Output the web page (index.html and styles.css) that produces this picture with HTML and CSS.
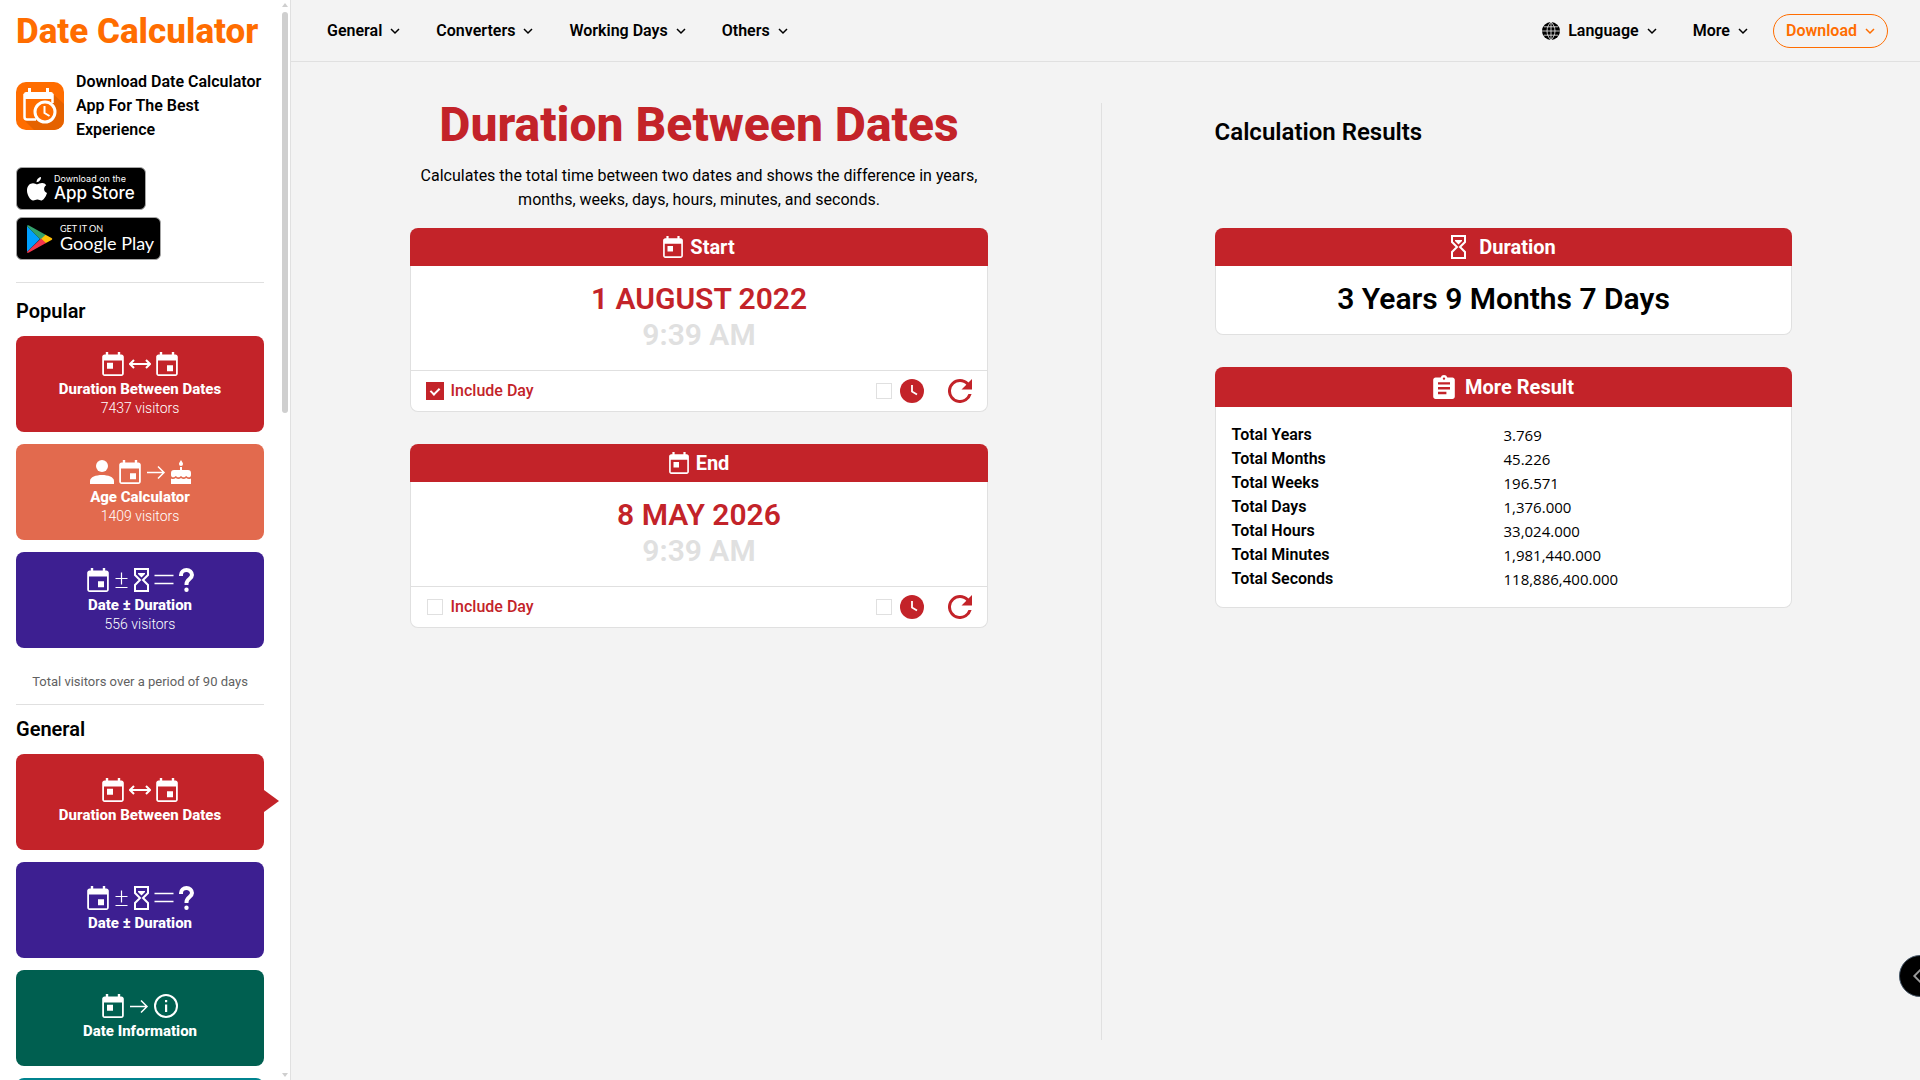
FILE: index.html
```html
<!DOCTYPE html>
<html lang="en">
<head>
  <meta charset="UTF-8">
  <meta name="viewport" content="width=device-width, initial-scale=1.0">
  <title>Date Calculator - Duration Between Dates</title>
  <link rel="stylesheet" href="styles.css">
</head>
<body>
  <!-- Icon set -->
  <svg class="icon-set" aria-hidden="true">
    <symbol id="cal-left" viewBox="3 1 18 20"><path d="M19 3h-1V1h-2v2H8V1H6v2H5c-1.1 0-2 .9-2 2v14c0 1.1.9 2 2 2h14c1.1 0 2-.9 2-2V5c0-1.100-.9-2-2-2zm.5 16.500h-15V8h15v11.500zM7 10h5v5H7z"/></symbol>
    <symbol id="cal-right" viewBox="3 1 18 20"><path d="M19 3h-1V1h-2v2H8V1H6v2H5c-1.100 0-2 .9-2 2v14c0 1.100.9 2 2 2h14c1.100 0 2-.9 2-2V5c0-1.100-.9-2-2-2zm.5 16.500h-15V8h15v11.500zM12 12h5v5h-5z"/></symbol>
    <symbol id="both" viewBox="0 0 22 24"><path d="M1 12h20M5 8l-4 4 4 4M17 8l4 4-4 4" fill="none" stroke="currentColor" stroke-width="2"/></symbol>
    <symbol id="arrow" viewBox="0 0 18 24"><path d="M0 12.500h17M11 6.500l6 6-6 6" fill="none" stroke="currentColor" stroke-width="1.500"/></symbol>
    <symbol id="person" viewBox="0 0 24 24"><circle cx="12" cy="6" r="6"/><path d="M0 24v-3c0-4 6-6 12-6s12 2 12 6v3z"/></symbol>
    <symbol id="cake" viewBox="0 0 20 24"><path d="M10 6a2 2 0 0 0 2-2c0-1-.6-1.500-2-4-1.400 2.500-2 3-2 4a2 2 0 0 0 2 2zM11 10V7H9v3H3a3 3 0 0 0-3 3v2c0 1.400 1 2.300 2.200 2.300 1 0 1.600-.4 2.600-1.300 1 .9 1.600 1.300 2.600 1.300S9 16.900 10 16c1 .9 1.600 1.300 2.600 1.300s1.600-.4 2.600-1.300c1 .9 1.600 1.300 2.600 1.300 1.200 0 2.200-.9 2.200-2.300v-2a3 3 0 0 0-3-3zM15.200 18c-1.700 1.400-3.500 1.400-5.200 0-1.700 1.400-3.500 1.400-5.200 0-1.600 1.300-3.300 1.400-4.800.5V24h20v-5.500c-1.500.9-3.200.8-4.800-.5z"/></symbol>
    <symbol id="plusminus" viewBox="0 0 12 24"><path d="M0 10.500h12M6 4.500v12M0 19.500h12" fill="none" stroke="currentColor" stroke-width="1.200"/></symbol>
    <symbol id="hourglass" viewBox="0 0 15 24"><path d="M1 1h13v6l-5 5 5 5v6H1v-6l5-5-5-5z" fill="none" stroke="currentColor" stroke-width="2"/><path d="M4 5h7v1L7.500 9.500 4 6z"/></symbol>
    <symbol id="equals" viewBox="0 0 19 24"><path d="M0 7.500h19M0 15.500h19" fill="none" stroke="currentColor" stroke-width="1.300"/></symbol>
    <symbol id="question" viewBox="0 0 15 24"><path d="M2 8V7a5.500 5 0 0 1 11 0c0 4-5.500 4-5.500 9v1" fill="none" stroke="currentColor" stroke-width="4"/><circle cx="7.500" cy="21.800" r="2.200"/></symbol>
    <symbol id="info" viewBox="0 0 24 24"><circle cx="12" cy="12" r="11" fill="none" stroke="currentColor" stroke-width="2"/><path d="M11 10.500h2.200V18H11zM11 6h2.200v2.200H11z"/></symbol>
    <symbol id="chevron" viewBox="0 0 10 10"><path d="M1 3l4 4 4-4" fill="none" stroke="currentColor" stroke-width="1.500"/></symbol>
    <symbol id="globe" viewBox="0 0 18 18"><circle cx="9" cy="9" r="9"/><path d="M9 0v18M0 9h18M2 4.800h14M2 13.200h14M9 0C3.700 5 3.700 13 9 18M9 0c5.300 5 5.300 13 0 18" fill="none" stroke="#f3f3f3" stroke-width=".8"/></symbol>
    <symbol id="clock" viewBox="0 0 24 24"><circle cx="12" cy="12" r="12"/><path d="M12 6v6.500l5 3" fill="none" stroke="#fff" stroke-width="1.800"/></symbol>
    <symbol id="refresh" viewBox="4 4 16 16"><path d="M17.650 6.350A7.960 7.960 0 0 0 12 4a8 8 0 1 0 7.730 10h-2.080A6 6 0 1 1 12 6c1.660 0 3.140.69 4.220 1.780L13 11h7V4z"/></symbol>
    <symbol id="clipboard" viewBox="3 1 18 20"><path d="M19 3h-4.200a3 3 0 0 0-5.600 0H5c-1.100 0-2 .9-2 2v14c0 1.100.9 2 2 2h14c1.100 0 2-.9 2-2V5c0-1.100-.9-2-2-2zm-7 0a1 1 0 1 1 0 2 1 1 0 0 1 0-2zm2 14H7v-2h7zm3-4H7v-2h10zm0-4H7V7h10z"/></symbol>
  </svg>

  <aside class="sidebar">
    <div class="sidebar-content">
      <a class="brand" href="#">Date Calculator</a>

      <div class="app-promo">
        <svg class="app-icon" viewBox="0 0 48 48" aria-hidden="true">
          <rect width="48" height="48" rx="10" fill="#ff6d00"/>
          <path d="M36 11l12 11v16a10 10 0 0 1-10 10H18L9 39z" fill="#e56200"/>
          <path d="M10 17h26v8l-8 13H10z" fill="#ff6d00"/>
          <path d="M20 37.500H11a2.500 2.500 0 0 1-2.500-2.500V13h28v8" fill="none" stroke="#fff" stroke-width="2.500"/>
          <path d="M8 17v-5a2 2 0 0 1 2-2h2V6h3v4h15V6h3v4h2a2 2 0 0 1 2 2v5z" fill="#fff"/>
          <circle cx="29" cy="30" r="10" fill="#ff6d00" stroke="#fff" stroke-width="3"/>
          <path d="M28.500 24v7l5 3" fill="none" stroke="#fff" stroke-width="2"/>
        </svg>
        <p>Download Date Calculator App For The Best Experience</p>
      </div>

      <div class="stores">
        <a class="store app-store" href="#">
          <svg width="20" height="24" viewBox="0 0 20 24" aria-hidden="true"><path fill="#fff" d="M14 0c.2 2.700-1.900 5.100-4.400 5.200C9.400 2.800 11.500.3 14 0zM19.200 8.200c-2.900 1.800-2.800 6.300.8 7.800-.8 2.600-3 7-5.300 7.400-1.600.2-2.400-.9-4.300-.9s-2.700 1-4.200 1C3.100 23.500 0 17.700 0 13.500 0 9 2.800 6.200 6 6.200c1.700 0 3.100 1.100 4.300 1.100 1 0 2.900-1.300 5-1.200 1.500.1 3 .8 3.900 2.100z"/></svg>
          <span class="store-text"><small>Download on the</small><b>App Store</b></span>
        </a>
        <a class="store google-play" href="#">
          <svg width="26" height="28" viewBox="0 0 26 28" aria-hidden="true"><path fill="#00a0ff" d="M0 1v26l13-13z"/><path fill="#34a26c" d="M0 1c0-1 1-1 2-.5L19 10l-5 5z"/><path fill="#ffc107" d="M18.500 9.700l6 3.300c1 .6 1 1.400 0 2l-6 3.300L14 14z"/><path fill="#f4364c" d="M0 27c0 1 1 1 2 .5l17-9.500-5-4.500z"/></svg>
          <span class="store-text"><small>GET IT ON</small><b>Google Play</b></span>
        </a>
      </div>

      <section class="tool-group">
        <h2>Popular</h2>
        <a class="tile red" href="#">
          <span class="tile-icons"><svg class="w22"><use href="#cal-left"/></svg><svg class="w22"><use href="#both"/></svg><svg class="w22"><use href="#cal-right"/></svg></span>
          <span class="tile-name">Duration Between Dates</span>
          <span class="tile-visitors">7437 visitors</span>
        </a>
        <a class="tile coral" href="#">
          <span class="tile-icons"><svg class="w24"><use href="#person"/></svg><svg class="w22"><use href="#cal-right"/></svg><svg class="w20"><use href="#arrow"/></svg><svg class="w20"><use href="#cake"/></svg></span>
          <span class="tile-name">Age Calculator</span>
          <span class="tile-visitors">1409 visitors</span>
        </a>
        <a class="tile purple" href="#">
          <span class="tile-icons"><svg class="w22"><use href="#cal-right"/></svg><svg class="w15"><use href="#plusminus"/></svg><svg class="w15"><use href="#hourglass"/></svg><svg class="w20"><use href="#equals"/></svg><svg class="w15"><use href="#question"/></svg></span>
          <span class="tile-name">Date ± Duration</span>
          <span class="tile-visitors">556 visitors</span>
        </a>
        <p class="visitors-note">Total visitors over a period of 90 days</p>
      </section>

      <section class="tool-group general">
        <h2>General</h2>
        <a class="tile red active" href="#">
          <span class="tile-icons"><svg class="w22"><use href="#cal-left"/></svg><svg class="w22"><use href="#both"/></svg><svg class="w22"><use href="#cal-right"/></svg></span>
          <span class="tile-name">Duration Between Dates</span>
        </a>
        <a class="tile purple" href="#">
          <span class="tile-icons"><svg class="w22"><use href="#cal-right"/></svg><svg class="w15"><use href="#plusminus"/></svg><svg class="w15"><use href="#hourglass"/></svg><svg class="w20"><use href="#equals"/></svg><svg class="w15"><use href="#question"/></svg></span>
          <span class="tile-name">Date ± Duration</span>
        </a>
        <a class="tile green" href="#">
          <span class="tile-icons"><svg class="w22"><use href="#cal-left"/></svg><svg class="w20"><use href="#arrow"/></svg><svg class="w24"><use href="#info"/></svg></span>
          <span class="tile-name">Date Information</span>
        </a>
        <a class="tile teal" href="#" aria-label="Next tool"></a>
      </section>
    </div>
    <div class="scrollbar" aria-hidden="true">
      <span class="scroll-up"></span>
      <span class="scroll-track"><span class="scroll-thumb"></span></span>
      <span class="scroll-down"></span>
    </div>
  </aside>

  <div class="page">
    <header class="topbar">
      <nav class="menu">
        <button type="button">General <svg><use href="#chevron"/></svg></button>
        <button type="button">Converters <svg><use href="#chevron"/></svg></button>
        <button type="button">Working Days <svg><use href="#chevron"/></svg></button>
        <button type="button">Others <svg><use href="#chevron"/></svg></button>
      </nav>
      <nav class="menu">
        <button type="button"><svg class="globe"><use href="#globe"/></svg>Language <svg><use href="#chevron"/></svg></button>
        <button type="button">More <svg><use href="#chevron"/></svg></button>
        <button type="button" class="download">Download <svg><use href="#chevron"/></svg></button>
      </nav>
    </header>

    <main class="columns">
      <section class="column">
        <div class="column-head center">
          <h1>Duration Between Dates</h1>
          <p>Calculates the total time between two dates and shows the difference in years, months, weeks, days, hours, minutes, and seconds.</p>
        </div>

        <div class="card">
          <h3 class="card-head"><svg class="head-cal"><use href="#cal-left"/></svg>Start</h3>
          <div class="card-date">
            <button type="button" class="date">1 AUGUST 2022</button>
            <button type="button" class="time">9:39 AM</button>
          </div>
          <div class="card-foot">
            <label class="include"><input type="checkbox" checked> Include Day</label>
            <label class="use-time"><input type="checkbox" aria-label="Use start time"><svg><use href="#clock"/></svg></label>
            <button type="button" class="reset" aria-label="Reset start"><svg><use href="#refresh"/></svg></button>
          </div>
        </div>

        <div class="card">
          <h3 class="card-head"><svg class="head-cal"><use href="#cal-left"/></svg>End</h3>
          <div class="card-date">
            <button type="button" class="date">8 MAY 2026</button>
            <button type="button" class="time">9:39 AM</button>
          </div>
          <div class="card-foot">
            <label class="include"><input type="checkbox"> Include Day</label>
            <label class="use-time"><input type="checkbox" aria-label="Use end time"><svg><use href="#clock"/></svg></label>
            <button type="button" class="reset" aria-label="Reset end"><svg><use href="#refresh"/></svg></button>
          </div>
        </div>
      </section>

      <section class="column results">
        <div class="column-head">
          <h2>Calculation Results</h2>
        </div>

        <div class="card">
          <h3 class="card-head wide-gap"><svg class="head-glass"><use href="#hourglass"/></svg>Duration</h3>
          <p class="duration">3 Years 9 Months 7 Days</p>
        </div>

        <div class="card">
          <h3 class="card-head tall"><svg class="head-clip"><use href="#clipboard"/></svg>More Result</h3>
          <table class="totals">
            <tr><th scope="row">Total Years</th><td>3.769</td></tr>
            <tr><th scope="row">Total Months</th><td>45.226</td></tr>
            <tr><th scope="row">Total Weeks</th><td>196.571</td></tr>
            <tr><th scope="row">Total Days</th><td>1,376.000</td></tr>
            <tr><th scope="row">Total Hours</th><td>33,024.000</td></tr>
            <tr><th scope="row">Total Minutes</th><td>1,981,440.000</td></tr>
            <tr><th scope="row">Total Seconds</th><td>118,886,400.000</td></tr>
          </table>
        </div>
      </section>
    </main>
  </div>

  <button type="button" class="side-toggle" aria-label="Open panel">
    <svg viewBox="0 0 42 42"><path d="M24 12l-9 9 9 9" fill="none" stroke="#999" stroke-width="2"/></svg>
  </button>
</body>
</html>
```

FILE: styles.css
```css
* {
  box-sizing: border-box;
}
body {
  margin: 0;
  display: flex;
  height: 100vh;
  overflow: hidden;
  background: #f3f3f3;
  color: #000;
  font-family: Roboto, sans-serif;
  font-size: 16px;
  line-height: 24px;
}
h1, h2, h3, p {
  margin: 0;
}
a {
  color: inherit;
  text-decoration: none;
}
button {
  padding: 0;
  border: none;
  background: none;
  color: inherit;
  font: inherit;
  cursor: pointer;
}
svg {
  flex: none;
  fill: currentColor;
}
.icon-set {
  display: none;
}

/* Sidebar */
.sidebar {
  display: flex;
  flex: none;
  width: 291px;
  overflow: hidden;
  background: #fff;
  border-right: 1px solid #e0e0e0;
}
.sidebar-content {
  flex: 1;
  padding: 12px 18px 0 16px;
}
.brand {
  display: block;
  color: #ff6d00;
  font-size: 35px;
  font-weight: 800;
  line-height: 40px;
  white-space: nowrap;
}
.app-promo {
  display: flex;
  align-items: center;
  gap: 12px;
  margin-top: 18px;
  font-weight: 600;
}
.app-icon {
  width: 48px;
  height: 48px;
}
.stores {
  display: flex;
  flex-direction: column;
  align-items: flex-start;
  gap: 7px;
  margin-top: 25px;
  padding-bottom: 22px;
  border-bottom: 1px solid #e0e0e0;
}
.store {
  display: flex;
  align-items: center;
  height: 43px;
  border: 1px solid #a6a6a6;
  border-radius: 6px;
  background: #000;
  color: #fff;
}
.app-store {
  width: 130px;
  padding-left: 10px;
  gap: 7px;
  font-family: Inter, sans-serif;
}
.google-play {
  width: 145px;
  padding-left: 10px;
  gap: 7px;
  font-family: Lato, sans-serif;
}
.store-text {
  display: flex;
  flex-direction: column;
  padding-bottom: 3px;
  white-space: nowrap;
}
.store small {
  font-size: 9px;
  line-height: 12px;
}
.store b {
  font-size: 17px;
  font-weight: 500;
  line-height: 16px;
}
.google-play b {
  font-size: 18px;
  font-weight: 400;
}
.tool-group {
  display: flex;
  flex-direction: column;
  gap: 12px;
  padding-top: 17px;
  border-bottom: 1px solid #e0e0e0;
}
.tool-group.general {
  padding-top: 13px;
}
.tool-group h2 {
  margin-bottom: 2px;
  font-size: 20px;
  font-weight: 600;
  line-height: 22px;
}
.tile {
  position: relative;
  display: flex;
  flex-direction: column;
  align-items: center;
  justify-content: center;
  height: 96px;
  border-radius: 8px;
  color: #fff;
}
.red {
  background: #c32329;
}
.coral {
  background: #e26a4e;
}
.purple {
  background: #3d1f91;
}
.green {
  background: #005f50;
}
.teal {
  background: #00838f;
}
.tile.active::after {
  content: "";
  position: absolute;
  left: 100%;
  top: 36px;
  border: 11px solid transparent;
  border-left: 15px solid #c32329;
  border-right: 0;
}
.tile-icons {
  display: flex;
  gap: 5px;
  height: 24px;
}
.tile-icons svg {
  height: 24px;
}
.w15 {
  width: 15px;
}
.w20 {
  width: 20px;
}
.w22 {
  width: 22px;
}
.w24 {
  width: 24px;
}
.tile-name {
  margin-top: 2px;
  font-size: 15px;
  font-weight: 800;
  line-height: 22px;
}
.tile-visitors {
  font-size: 14px;
  font-weight: 300;
  line-height: 16px;
}
.visitors-note {
  padding: 10px 0;
  color: #616161;
  font-size: 13px;
  text-align: center;
}

/* Sidebar scroll bar */
.scrollbar {
  display: flex;
  flex-direction: column;
  justify-content: space-between;
  align-items: center;
  width: 8px;
  padding: 3px 2px 3px 0;
}
.scroll-up, .scroll-down {
  border: 3px solid transparent;
}
.scroll-up {
  border-top: 0;
  border-bottom: 4px solid #cfcfcf;
}
.scroll-down {
  border-bottom: 0;
  border-top: 4px solid #cfcfcf;
}
.scroll-track {
  flex: 1;
  width: 6px;
  padding: 5px 0;
}
.scroll-thumb {
  display: block;
  height: 38%;
  border-radius: 3px;
  background: #cfcfcf;
}

/* Top bar */
.page {
  display: flex;
  flex: 1;
  flex-direction: column;
}
.topbar {
  display: flex;
  align-items: center;
  justify-content: space-between;
  height: 62px;
  padding: 0 32px 0 36px;
  border-bottom: 1px solid #e0e0e0;
}
.menu {
  display: flex;
  align-items: center;
  gap: 36px;
}
.menu button {
  display: flex;
  align-items: center;
  gap: 8px;
  font-weight: 600;
}
.menu svg {
  width: 10px;
  height: 10px;
}
.menu .globe {
  width: 18px;
  height: 18px;
}
.menu .download {
  height: 34px;
  margin-left: -11px;
  padding: 0 12px;
  border: 1px solid #ff6d00;
  border-radius: 17px;
  color: #ff6d00;
}

/* Calculator */
.columns {
  display: grid;
  flex: 1;
  grid-template-columns: 1fr 1fr;
  padding: 41px 15px 40px 6px;
}
.column {
  padding: 0 14%;
}
.results {
  border-left: 1px solid #e0e0e0;
}
.column-head {
  min-height: 125px;
}
.center {
  text-align: center;
}
.column-head h1 {
  margin-bottom: 17px;
  color: #c32329;
  font-size: 48px;
  font-weight: 800;
  line-height: 44px;
  white-space: nowrap;
}
.column-head h2 {
  font-size: 24px;
  font-weight: 600;
  line-height: 58px;
}
.card {
  margin-bottom: 32px;
  border: 1px solid #e0e0e0;
  border-top: 0;
  border-radius: 8px;
  background: #fff;
}
.card-head {
  display: flex;
  align-items: center;
  justify-content: center;
  gap: 7px;
  height: 38px;
  margin: 0 -1px;
  border-radius: 8px 8px 0 0;
  background: #c32329;
  color: #fff;
  font-size: 20px;
  font-weight: 700;
}
.card-head.tall {
  gap: 10px;
  height: 40px;
}
.card-head.wide-gap {
  gap: 13px;
}
.head-cal {
  width: 20px;
  height: 22px;
}
.head-glass {
  width: 15px;
  height: 24px;
}
.head-clip {
  width: 22px;
  height: 24px;
}
.card-date {
  display: flex;
  flex-direction: column;
  align-items: center;
  padding: 15px 0 17px;
}
.card-date button {
  font-size: 30px;
  font-weight: 600;
  line-height: 36px;
}
.card-date .date {
  color: #c32329;
}
.card-date .time {
  color: #e0e0e0;
}
.card-foot {
  display: flex;
  align-items: center;
  height: 41px;
  padding: 0 15px;
  border-top: 1px solid #e0e0e0;
  color: #c32329;
}
.card-foot label {
  display: flex;
  align-items: center;
  gap: 7px;
}
.card-foot input {
  appearance: none;
  display: grid;
  place-items: center;
  width: 16px;
  height: 16px;
  margin: 0 1px;
  border: 1px solid #e0e0e0;
  background: #fff;
}
.card-foot input:checked {
  width: 18px;
  height: 18px;
  margin: 0;
  border: none;
  background: #c32329;
}
.card-foot input:checked::after {
  content: "";
  width: 4px;
  height: 7px;
  margin-bottom: 2px;
  border: solid #fff;
  border-width: 0 2px 2px 0;
  rotate: 45deg;
}
.include {
  flex: 1;
  font-weight: 500;
}
.card-foot svg {
  display: block;
  width: 24px;
  height: 24px;
}
.reset {
  margin-left: 24px;
}
.duration {
  padding: 15px 0 17px;
  font-size: 30px;
  font-weight: 600;
  line-height: 36px;
  text-align: center;
}
.totals {
  width: 100%;
  padding: 16px;
  border-spacing: 0;
}
.totals th, .totals td {
  width: 50%;
  height: 24px;
  padding: 0;
  text-align: left;
}
.totals th {
  font-weight: 600;
}
.totals td {
  font-family: "Open Sans", sans-serif;
  font-size: 15px;
}

.side-toggle {
  position: fixed;
  right: -21px;
  top: 955px;
  width: 42px;
  height: 42px;
  border: 1px solid #456;
  border-radius: 50%;
  background: #000;
}
```
